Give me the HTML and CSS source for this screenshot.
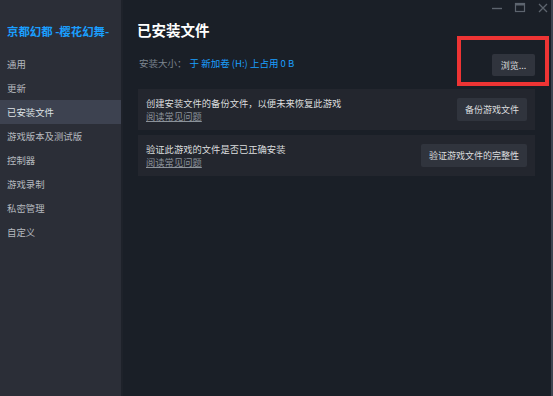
FILE: index.html
```html
<!DOCTYPE html>
<html lang="zh">
<head>
<meta charset="utf-8">
<link rel="stylesheet" href="styles.css">
</head>
<body>
<div class="app">
  <aside class="sidebar">
    <div class="game-title">京都幻都 -樱花幻舞-</div>
    <nav class="nav">
      <div class="nav-item">通用</div>
      <div class="nav-item">更新</div>
      <div class="nav-item active">已安装文件</div>
      <div class="nav-item">游戏版本及测试版</div>
      <div class="nav-item">控制器</div>
      <div class="nav-item">游戏录制</div>
      <div class="nav-item">私密管理</div>
      <div class="nav-item">自定义</div>
    </nav>
  </aside>
  <main class="main">
    <div class="window-controls">
      <svg class="wc" width="12" height="12" viewBox="0 0 12 12"><path d="M1 6.5H11" stroke="#5d646e" stroke-width="1.4"/></svg>
      <svg class="wc" width="12" height="12" viewBox="0 0 12 12"><rect x="1.5" y="1.5" width="9" height="8" fill="none" stroke="#5d646e" stroke-width="1.2"/><path d="M1.5 2.5H10.5" stroke="#5d646e" stroke-width="2"/></svg>
      <svg class="wc" width="12" height="12" viewBox="0 0 12 12"><path d="M2 2L10 10M10 2L2 10" stroke="#5d646e" stroke-width="1.3"/></svg>
    </div>
    <h1 class="page-title">已安装文件</h1>
    <div class="size-row">
      <div class="size-info"><span class="size-label">安装大小：</span><span class="size-value">于 新加卷 (H:) 上占用 0 B</span></div>
      <div class="browse-wrap">
        <button class="btn">浏览...</button>
        <div class="highlight"></div>
      </div>
    </div>
    <div class="card">
      <div class="card-text">
        <div class="card-desc">创建安装文件的备份文件，以便未来恢复此游戏</div>
        <a class="card-link">阅读常见问题</a>
      </div>
      <button class="btn">备份游戏文件</button>
    </div>
    <div class="card">
      <div class="card-text">
        <div class="card-desc">验证此游戏的文件是否已正确安装</div>
        <a class="card-link">阅读常见问题</a>
      </div>
      <button class="btn">验证游戏文件的完整性</button>
    </div>
  </main>
  <div class="edge"></div>
</div>
</body>
</html>
```
FILE: styles.css
```css
* { box-sizing: border-box; }
html, body { margin: 0; padding: 0; }
body {
  width: 553px;
  height: 396px;
  overflow: hidden;
  background: #1a1f27;
  font-family: "Noto Sans CJK SC", "Noto Sans", sans-serif;
}
.app {
  display: flex;
  height: 396px;
}
.sidebar {
  width: 123px;
  flex-shrink: 0;
  background: #2b2e37;
  padding-top: 22px;
  border-right: 2px solid #1e222a;
}
.game-title {
  color: #1a9fff;
  font-weight: bold;
  font-size: 11.4px;
  line-height: 18px;
  padding-left: 7px;
  white-space: nowrap;
}
.nav {
  margin-top: 12px;
}
.nav-item {
  height: 24px;
  line-height: 24px;
  padding-left: 7px;
  font-size: 9.4px;
  color: #b5b9bf;
}
.nav-item.active {
  background: #3d4250;
  color: #dfe3e6;
}
.main {
  flex: 1;
  position: relative;
  padding: 19px 16px 0 14px;
}
.window-controls {
  position: absolute;
  top: 2px;
  right: 2px;
  display: flex;
  gap: 11px;
}
.page-title {
  margin: 0;
  color: #ffffff;
  font-size: 14.5px;
  line-height: 22px;
  font-weight: bold;
}
.size-row {
  display: flex;
  align-items: center;
  justify-content: space-between;
  height: 22px;
  margin-top: 11px;
  padding-left: 2px;
}
.size-info {
  font-size: 9.5px;
}
.size-label { color: #7d8590; margin-right: 3px; }
.size-value { color: #1a9fff; }
.browse-wrap {
  position: relative;
}
.highlight {
  position: absolute;
  left: -35px;
  top: -14px;
  width: 92px;
  height: 50px;
  border: 4px solid #ee3434;
}
.btn {
  background: #30343d;
  color: #dcdedf;
  border: none;
  border-radius: 2px;
  font-family: inherit;
  font-size: 9px;
  height: 23px;
  padding: 0 8px;
}
.browse-wrap .btn { width: 43px; height: 22px; padding: 0; }
.card {
  display: flex;
  align-items: center;
  justify-content: space-between;
  background: #23262e;
  height: 41px;
  margin-top: 15px;
  padding: 0 8px 0 8px;
  margin-left: 1px;
}
.card + .card { margin-top: 5px; }
.card-desc {
  color: #dcdedf;
  font-size: 9.3px;
  line-height: 13px;
}
.card-link {
  display: block;
  color: #8b929a;
  font-size: 9.3px;
  line-height: 12px;
  text-decoration: underline;
}
.edge {
  width: 2px;
  background: #3e4550;
  flex-shrink: 0;
}
```
